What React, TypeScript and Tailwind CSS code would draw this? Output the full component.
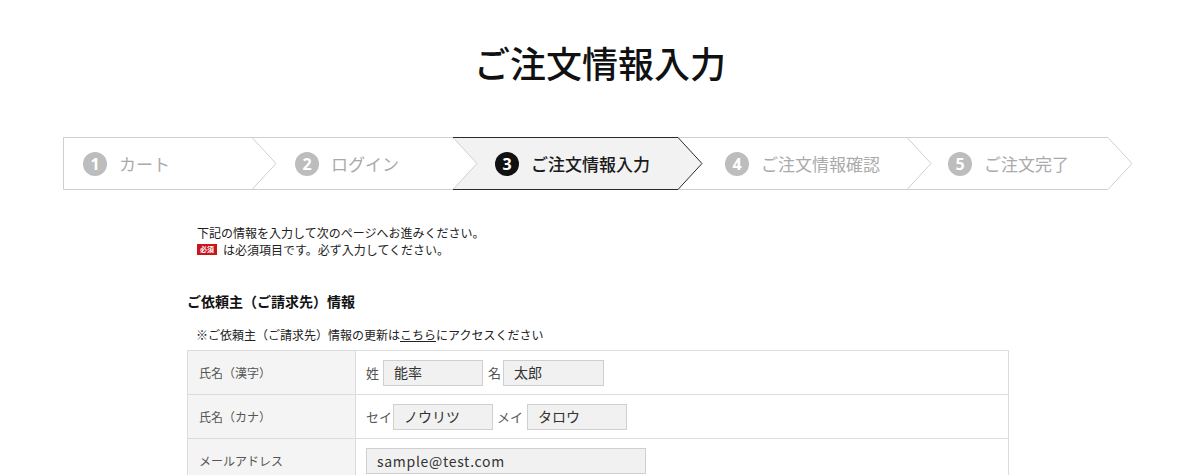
import React from "react";

const jp = { fontFamily: '"Noto Sans CJK JP", "Noto Sans", sans-serif' };

const steps = [
  { n: "1", label: "カート", w: 189, pl: 20, active: false },
  { n: "2", label: "ログイン", w: 201, pl: 43, active: false },
  { n: "3", label: "ご注文情報入力", w: 225, pl: 42, active: true },
  { n: "4", label: "ご注文情報確認", w: 229, pl: 47, active: false },
  { n: "5", label: "ご注文完了", w: 201, pl: 41, active: false },
];

function StepBar() {
  return (
    <div className="relative ml-[63px] mt-[51px] h-[53px] w-[1070px]">
      <svg className="absolute inset-0" width="1070" height="53" viewBox="0 0 1070 53">
        <polygon points="390,0.5 615,0.5 639,26.5 615,52.5 390,52.5 414,26.5" fill="#f2f2f2" />
        <polyline points="1045,0.5 0.5,0.5 0.5,52.5 1045,52.5" fill="none" stroke="#cfcfcf" strokeWidth="1" />
        <polyline points="1045,0.5 1069,26.5 1045,52.5" fill="none" stroke="#cfcfcf" strokeWidth="1" />
        <polyline points="189,0.5 213,26.5 189,52.5" fill="none" stroke="#cfcfcf" strokeWidth="1" />
        <polyline points="390,0.5 414,26.5 390,52.5" fill="none" stroke="#cfcfcf" strokeWidth="1" />
        <polyline points="844,0.5 868,26.5 844,52.5" fill="none" stroke="#cfcfcf" strokeWidth="1" />
        <polyline points="390,0.5 615,0.5 639,26.5 615,52.5 390,52.5" fill="none" stroke="#2a2a2a" strokeWidth="1" />
      </svg>
      <div className="relative flex h-full">
        {steps.map((s) => (
          <div
            key={s.n}
            className="flex h-full shrink-0 items-center"
            style={{ width: s.w, paddingLeft: s.pl }}
          >
            <span
              className={`flex h-[24px] w-[24px] items-center justify-center rounded-full text-[16px] font-bold leading-none text-white ${
                s.active ? "bg-[#111]" : "bg-[#bdbdbd]"
              }`}
              style={{ fontFamily: '"Noto Sans", sans-serif' }}
            >
              {s.n}
            </span>
            <span
              className={`ml-[12px] whitespace-nowrap text-[17px] ${
                s.active ? "font-medium text-[#1a1a1a]" : "text-[#aaaaaa]"
              }`}
              style={jp}
            >
              {s.label}
            </span>
          </div>
        ))}
      </div>
    </div>
  );
}

function Input({ w, children }: { w: number; children: React.ReactNode }) {
  return (
    <div
      className="flex h-[26px] items-center border border-[#cfcfcf] bg-[#f1f1f1] pl-[10px] text-[14px] text-[#333]"
      style={{ width: w }}
    >
      {children}
    </div>
  );
}

function Row({ label, children, last }: { label: string; children: React.ReactNode; last?: boolean }) {
  return (
    <div className={`flex h-[44px] ${last ? "" : "border-b border-[#dcdcdc]"}`}>
      <div className="flex w-[168px] shrink-0 items-center border-r border-[#dcdcdc] bg-[#f4f4f4] pl-[11px] text-[12px] text-[#555]">
        {label}
      </div>
      <div className="flex flex-1 items-center pl-[10px] text-[13px] text-[#555]">{children}</div>
    </div>
  );
}

export default function App() {
  return (
    <div className="h-[475px] w-[1200px] overflow-hidden bg-white text-[#222]" style={jp}>
      <h1 className="mt-[38px] text-center text-[36px] font-medium leading-[48px] text-[#111]">ご注文情報入力</h1>
      <StepBar />
      <div className="ml-[197px] mt-[34px] text-[12px] leading-[17px] text-[#222]">
        <p>下記の情報を入力して次のページへお進みください。</p>
        <p className="flex items-center">
          <span className="mr-[6px] inline-flex h-[11px] w-[20px] items-center justify-center bg-[#c8161d] text-[7px] font-bold leading-none text-white">
            必須
          </span>
          は必須項目です。必ず入力してください。
        </p>
      </div>
      <h2 className="ml-[187px] mt-[33px] text-[14px] font-bold leading-[20px] text-[#111]">ご依頼主（ご請求先）情報</h2>
      <p className="ml-[196px] mt-[15px] text-[12px] leading-[17px] text-[#222]">
        ※ご依頼主（ご請求先）情報の更新は<span className="underline">こちら</span>にアクセスください
      </p>
      <div className="ml-[187px] mt-[7px] w-[822px] border border-[#dcdcdc]">
        <Row label="氏名（漢字）">
          <span>姓</span>
          <div className="ml-[4px]">
            <Input w={100}>能率</Input>
          </div>
          <span className="ml-[5px]">名</span>
          <div className="ml-[2px]">
            <Input w={101}>太郎</Input>
          </div>
        </Row>
        <Row label="氏名（カナ）">
          <span>セイ</span>
          <div className="ml-[1px]">
            <Input w={100}>ノウリツ</Input>
          </div>
          <span className="ml-[4px]">メイ</span>
          <div className="ml-[4px]">
            <Input w={100}>タロウ</Input>
          </div>
        </Row>
        <Row label="メールアドレス" last>
          <Input w={280}>
            <span className="tracking-[0.05em]">sample@test.com</span>
          </Input>
        </Row>
      </div>
    </div>
  );
}
